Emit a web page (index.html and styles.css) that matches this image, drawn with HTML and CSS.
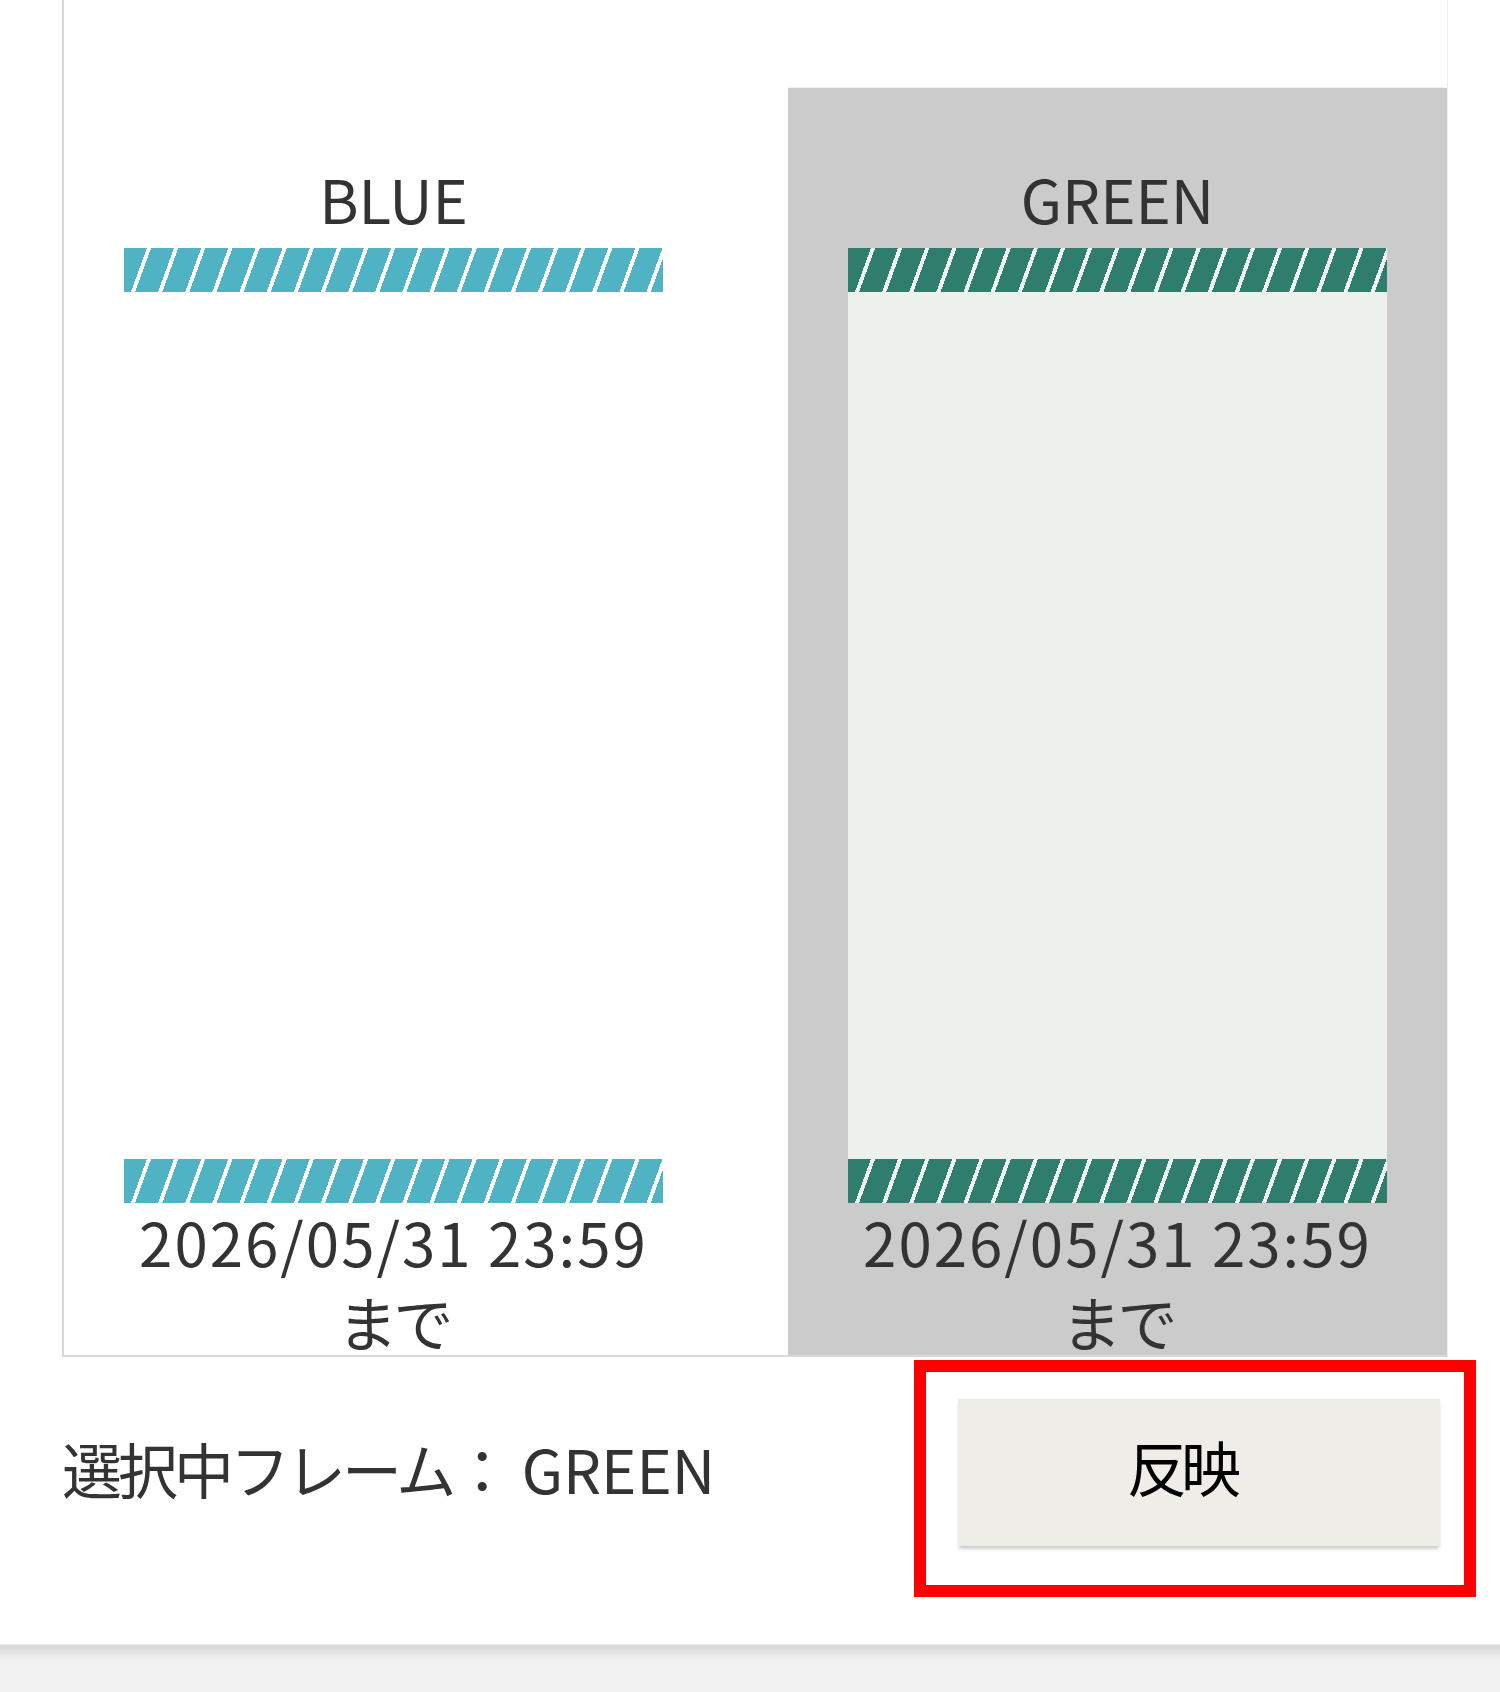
FILE: index.html
```html
<!DOCTYPE html>
<html lang="ja">
<head>
  <meta charset="UTF-8" />
  <meta name="viewport" content="width=device-width, initial-scale=1.0"/>
  <title>フレーム選択</title>
  <link rel="stylesheet" href="styles.css">
</head>
<body>
  <main class="screen">
    <section class="frame-list">
      <div class="frame">
        <p class="frame-name">BLUE</p>
        <div class="frame-bar bar-blue"></div>
        <div class="frame-body"></div>
        <div class="frame-bar bar-blue"></div>
        <p class="frame-date">2026/05/31 23:59</p>
        <p class="frame-until">まで</p>
      </div>
      <div class="frame selected">
        <p class="frame-name">GREEN</p>
        <div class="frame-bar bar-green"></div>
        <div class="frame-body"></div>
        <div class="frame-bar bar-green"></div>
        <p class="frame-date">2026/05/31 23:59</p>
        <p class="frame-until">まで</p>
      </div>
    </section>

    <div class="actions">
      <p class="current"><span class="ja">選択中フレーム：</span> GREEN</p>
      <div class="highlight">
        <button type="button" class="apply-btn"><span class="ja">反映</span></button>
      </div>
    </div>
  </main>
  <footer class="bottom-bar"></footer>
</body>
</html>
```

FILE: styles.css
```css
* {
  margin: 0;
  padding: 0;
  box-sizing: border-box;
}

body {
  background: #fff;
  color: #333;
  font-family: "Noto Sans CJK JP", "Noto Sans", sans-serif;
  font-size: 60px;
  line-height: 76px;
}

.ja {
  letter-spacing: -6px;
}

.screen {
  height: 1644px;
  background: #fff;
}

.frame-list {
  display: grid;
  grid-template-columns: 1fr 1fr;
  column-gap: 65px;
  width: 1386px;
  margin-left: 62px;
  padding-top: 88px;
  border-left: 2px solid #d6d6d6;
  border-right: 1px solid #efefef;
  border-bottom: 2px solid #d9d9d9;
}

.frame {
  display: flex;
  flex-direction: column;
  align-items: center;
  padding: 72px 60px 0;
  text-align: center;
}

.frame.selected {
  background: #cbcbcb;
  box-shadow: 0 -1px 0 #f0f0f0;
}

.frame-name {
  margin-bottom: 12px;
}

.frame-bar {
  width: 100%;
  height: 44px;
}

.bar-blue {
  background: repeating-linear-gradient(110deg, #4fb3c3 0 21.5px, #fff 21.5px 25.5px);
}

.bar-green {
  background: repeating-linear-gradient(110deg, #2e7d6d 0 21.5px, #f2f6f3 21.5px 25.5px);
}

.frame-body {
  width: 100%;
  height: 867px;
}

.selected .frame-body {
  background: #ecf1ee;
}

.frame-date {
  letter-spacing: 2px;
  white-space: nowrap;
}

.frame-until {
  margin-top: 7px;
  line-height: 69px;
  letter-spacing: -4px;
}

.actions {
  display: flex;
  justify-content: space-between;
  align-items: flex-start;
  padding: 3px 24px 0 62px;
}

.current {
  margin-top: 70px;
}

.current .ja {
  letter-spacing: -4px;
}

.highlight {
  border: 12px solid #ff0000;
  padding: 27px 24px 39px 32px;
}

.apply-btn {
  display: block;
  width: 482px;
  height: 147px;
  padding: 0 36px 14px 0;
  border: none;
  background: #eeede8;
  color: #000;
  font-family: inherit;
  font-size: 60px;
  box-shadow: 0 4px 3px -1px rgba(0, 0, 0, 0.18), 0 0 2px rgba(0, 0, 0, 0.06);
  cursor: pointer;
}

.bottom-bar {
  height: 48px;
  background: linear-gradient(#ececec 0, #d8d8d8 2px, #f2f2f2 16px);
}
```
